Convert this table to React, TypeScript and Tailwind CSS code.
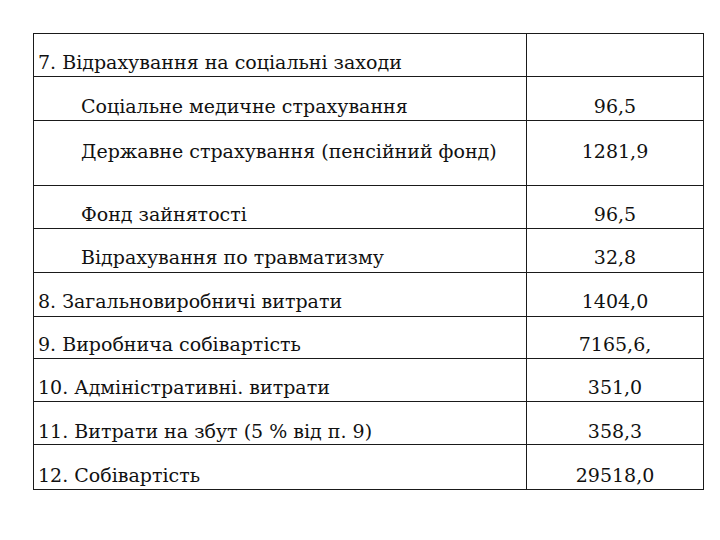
type Row = {
  label: string;
  value: string;
  indent?: boolean;
  h: string;
  align: string;
};

const rows: Row[] = [
  { label: '7. Відрахування на соціальні заходи', value: '', h: 'h-[43px]', align: 'items-end pb-[2px]' },
  { label: 'Соціальне медичне страхування', value: '96,5', indent: true, h: 'h-[44px]', align: 'items-end pb-[2px]' },
  { label: 'Державне страхування (пенсійний фонд)', value: '1281,9', indent: true, h: 'h-[65px]', align: 'items-start pt-[18px]' },
  { label: 'Фонд зайнятості', value: '96,5', indent: true, h: 'h-[43px]', align: 'items-end pb-[2px]' },
  { label: 'Відрахування по травматизму', value: '32,8', indent: true, h: 'h-[44px]', align: 'items-end pb-[3px]' },
  { label: '8. Загальновиробничі витрати', value: '1404,0', h: 'h-[44px]', align: 'items-end pb-[3px]' },
  { label: '9. Виробнича собівартість', value: '7165,6,', h: 'h-[42px]', align: 'items-end pb-[2px]' },
  { label: '10. Адміністративні. витрати', value: '351,0', h: 'h-[43px]', align: 'items-end pb-[2px]' },
  { label: '11. Витрати на збут (5 % від п. 9)', value: '358,3', h: 'h-[43px]', align: 'items-end pb-[1px]' },
  { label: '12. Собівартість', value: '29518,0', h: 'h-[44px]', align: 'items-end pb-[2px]' },
];

export default function App() {
  return (
    <div className="w-[720px] h-[540px] bg-white pt-[33px] pl-[33px] text-[#111] [font-family:'DejaVu_Serif','Liberation_Serif',serif] text-[19px] leading-[24px]">
      <div className="w-[671px] border border-[#1a1a1a]">
        {rows.map((r, i) => (
          <div
            key={i}
            className={`flex ${r.h} ${i < rows.length - 1 ? 'border-b border-[#1a1a1a]' : ''}`}
          >
            <div className={`flex w-[492px] whitespace-nowrap ${r.align} ${r.indent ? 'pl-[47px]' : 'pl-[4px]'}`}>
              {r.label}
            </div>
            <div className={`flex flex-1 justify-center border-l border-[#1a1a1a] ${r.align}`}>
              {r.value}
            </div>
          </div>
        ))}
      </div>
    </div>
  );
}
